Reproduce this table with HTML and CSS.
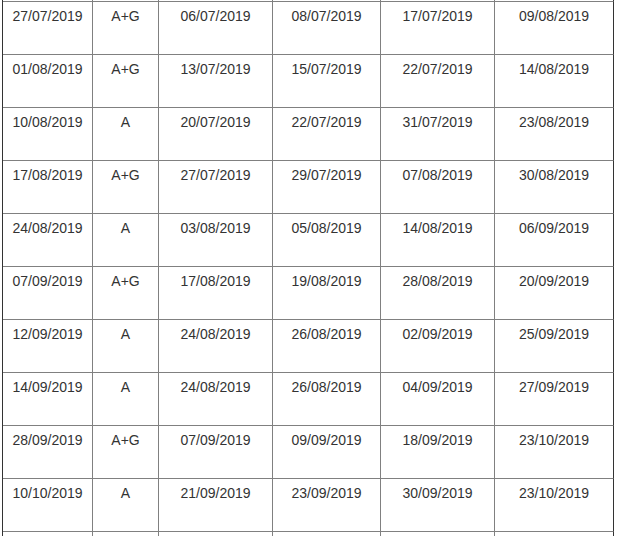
FILE: index.html
```html
<!DOCTYPE html>
<html>
<head>
<meta charset="utf-8">
<link rel="stylesheet" href="styles.css">
</head>
<body>
<div class="wrap">
<table class="sched">
<colgroup>
<col class="c1"><col class="c2"><col class="c3"><col class="c4"><col class="c5"><col class="c6">
</colgroup>
<tbody>
<tr class="stub"><td></td><td></td><td></td><td></td><td></td><td></td></tr>
<tr><td>27/07/2019</td><td>A+G</td><td>06/07/2019</td><td>08/07/2019</td><td>17/07/2019</td><td>09/08/2019</td></tr>
<tr><td>01/08/2019</td><td>A+G</td><td>13/07/2019</td><td>15/07/2019</td><td>22/07/2019</td><td>14/08/2019</td></tr>
<tr><td>10/08/2019</td><td>A</td><td>20/07/2019</td><td>22/07/2019</td><td>31/07/2019</td><td>23/08/2019</td></tr>
<tr><td>17/08/2019</td><td>A+G</td><td>27/07/2019</td><td>29/07/2019</td><td>07/08/2019</td><td>30/08/2019</td></tr>
<tr><td>24/08/2019</td><td>A</td><td>03/08/2019</td><td>05/08/2019</td><td>14/08/2019</td><td>06/09/2019</td></tr>
<tr><td>07/09/2019</td><td>A+G</td><td>17/08/2019</td><td>19/08/2019</td><td>28/08/2019</td><td>20/09/2019</td></tr>
<tr><td>12/09/2019</td><td>A</td><td>24/08/2019</td><td>26/08/2019</td><td>02/09/2019</td><td>25/09/2019</td></tr>
<tr><td>14/09/2019</td><td>A</td><td>24/08/2019</td><td>26/08/2019</td><td>04/09/2019</td><td>27/09/2019</td></tr>
<tr><td>28/09/2019</td><td>A+G</td><td>07/09/2019</td><td>09/09/2019</td><td>18/09/2019</td><td>23/10/2019</td></tr>
<tr><td>10/10/2019</td><td>A</td><td>21/09/2019</td><td>23/09/2019</td><td>30/09/2019</td><td>23/10/2019</td></tr>
<tr class="tail"><td></td><td></td><td></td><td></td><td></td><td></td></tr>
</tbody>
</table>
</div>
</body>
</html>
```
FILE: styles.css
```css
html, body {
  margin: 0;
  padding: 0;
  background: #fff;
}
body {
  font-family: "Liberation Sans", Arial, sans-serif;
  font-size: 14px;
  color: #333;
}
.wrap {
  padding: 0 0 0 2px;
  height: 536px;
  overflow: hidden;
}
.sched {
  border-collapse: separate;
  border-spacing: 0;
  table-layout: fixed;
  width: 612px;
  border-left: 1px solid #333;
}
.c1 { width: 90px; }
.c2 { width: 66px; }
.c3 { width: 114px; }
.c4 { width: 108px; }
.c5 { width: 114px; }
.c6 { width: 119px; }
.sched td {
  box-sizing: border-box;
  height: 53px;
  padding: 6px 0 0 0;
  vertical-align: top;
  text-align: center;
  line-height: 16px;
  border-right: 1px solid #808080;
  border-bottom: 1px solid #808080;
}
.sched td:last-child {
  border-right-color: #333;
}
.sched .stub td {
  height: 2px;
  padding: 0;
}
.sched .tail td {
  height: 53px;
}
```
